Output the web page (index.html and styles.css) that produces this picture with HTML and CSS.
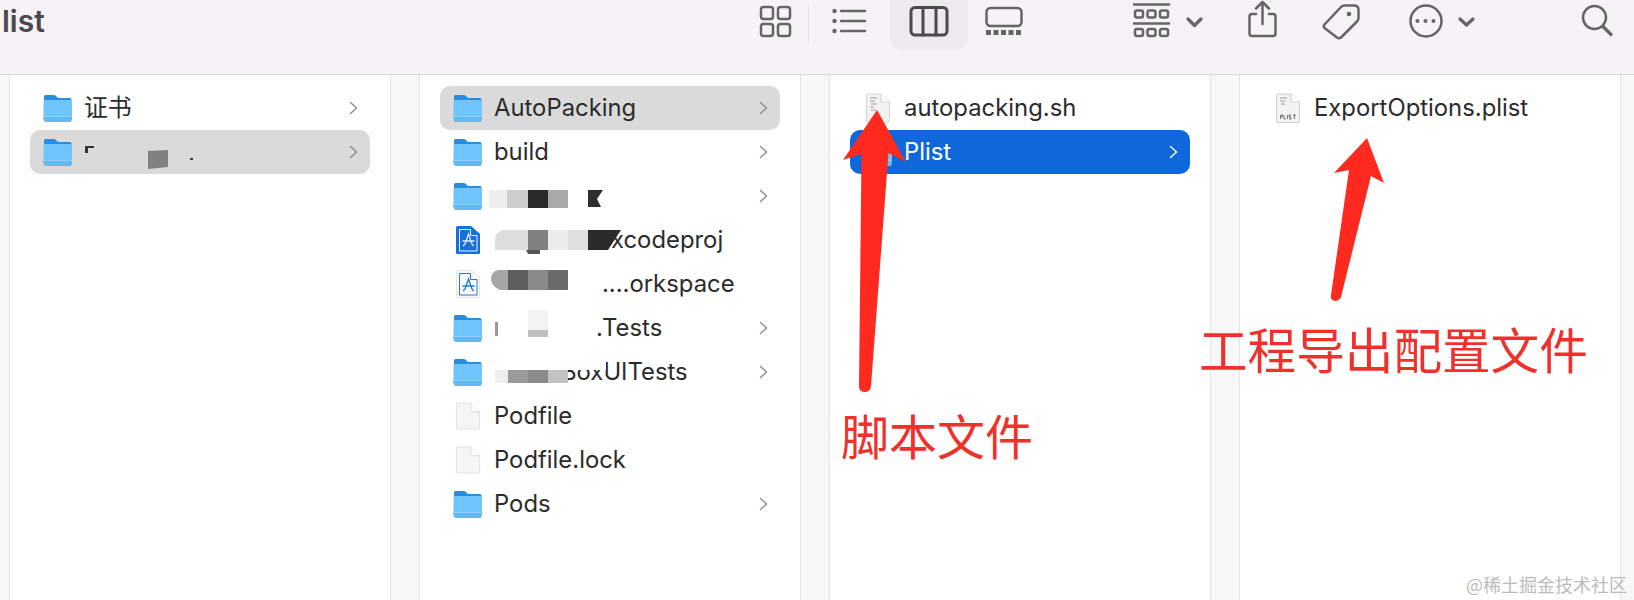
FILE: index.html
```html
<!DOCTYPE html>
<html lang="en">
<head>
    <meta charset="UTF-8">
    <meta name="viewport" content="width=device-width, initial-scale=1.0">
    <title>plist</title>
    <link rel="stylesheet" href="styles.css">
</head>
<body>
    <!-- shared file icons -->
    <svg class="defs" width="0" height="0">
        <symbol id="folder" viewBox="0 0 29 28">
            <path d="M1 12V2.5Q1 1 2.5 1H11Q12.5 1 13.5 2.5L15 4H27Q28.5 4 28.5 5.5V12Z" fill="#2a8ddb"/>
            <path d="M.5 8Q.5 6 2.5 6H27Q29 6 29 8V25Q29 27 27 27H2.5Q.5 27 .5 25Z" fill="#6fc6fc"/>
            <path d="M.5 22H29V25Q29 27 27 27H2.5Q.5 27 .5 25Z" fill="#60baf4"/>
            <path d="M.5 22.5H29" stroke="#8ad2fc"/>
            <path d="M1.5 27.5H28" stroke="#8fabbf" stroke-width="1"/>
        </symbol>
        <symbol id="doc" viewBox="0 0 26 29">
            <path d="M1.5 1H16L25 10V26.500Q25 28 23.5 28H2.5Q1 28 1 26.500V1.5Z" fill="#f5f5f5" stroke="#e0e0e0"/>
            <path d="M16 1V10H25" fill="#fff" stroke="#dedede"/>
        </symbol>
        <symbol id="project" viewBox="0 0 24 28">
            <path d="M1.5 0H15L24 8V26.500Q24 28 22.5 28H1.5Q0 28 0 26.500V1.5Q0 0 1.5 0Z" fill="#1670d8"/>
            <path d="M3.5 3.5H14.500V9.5H21V25H3.5Z" fill="none" stroke="#e8f2fd"/>
            <path d="M9 18L12.5 8L16 18M6.5 15H18.5M7 20L9 18M17.5 20L16 18" fill="none" stroke="#dcebfb" stroke-width="1.3"/>
        </symbol>
        <symbol id="workspace" viewBox="0 0 24 28">
            <path d="M1 .5H15L23.5 8V27.5H.5V1Z" fill="#fafafa" stroke="#e4e4e4"/>
            <path d="M3.5 3.5H14.500V9.5H21V25H3.5Z" fill="none" stroke="#1f78dc"/>
            <path d="M9 19L12.5 9L16 19M6.5 16H18.5M7 21L9 19M17.5 21L16 19" fill="none" stroke="#1f78dc" stroke-width="1.3"/>
        </symbol>
        <symbol id="script" viewBox="0 0 24 30">
            <path d="M1.5 1H15L23.5 9V28Q23.5 29.5 22 29.5H2Q.5 29.5 .5 28V2Q.5 1 1.5 1Z" fill="#f2f2f2" stroke="#d4d4d4"/>
            <path d="M15 1V9H23.5" fill="#fff" stroke="#d4d4d4"/>
            <path d="M4 5H11M4 8H9M5 11H11M4 14H8M5 17H10" stroke="#bdbdbd" stroke-width="1.3"/>
        </symbol>
        <symbol id="plist" viewBox="0 0 24 30">
            <path d="M1.5 1H15L23.5 9V28Q23.5 29.5 22 29.5H2Q.5 29.5 .5 28V2Q.5 1 1.5 1Z" fill="#f2f2f2" stroke="#cfcfcf"/>
            <path d="M15 1V9H23.5" fill="#fff" stroke="#cfcfcf"/>
            <path d="M4 5H11M4 8H9M5 11H9" stroke="#b8b8b8" stroke-width="1.3"/>
            <path d="M4.5 22V26M4.5 22H6.5V24H4.5M8 22V26H10M11.5 22V26M13 26H15V24H13V22H15M17 22H20M18.5 22V26" fill="none" stroke="#555" stroke-width=".8"/>
        </symbol>
        <symbol id="chevron" viewBox="0 0 9 14">
            <path d="M1.5 1.5L7.5 7L1.5 12.5" fill="none" stroke="currentColor" stroke-width="1.4" stroke-linecap="round"/>
        </symbol>
    </svg>

    <header class="toolbar">
        <div class="title">list</div>
        <svg class="tool tool-grid" width="34" height="50" viewBox="0 0 34 50">
            <rect x="3" y="7" width="12" height="12" rx="2.5"/><rect x="20" y="7" width="12" height="12" rx="2.5"/>
            <rect x="3" y="24" width="12" height="12" rx="2.5"/><rect x="20" y="24" width="12" height="12" rx="2.5"/>
        </svg>
        <div class="divider"></div>
        <svg class="tool tool-list" width="38" height="50" viewBox="0 0 38 50">
            <path d="M11 11H35M11 21H35M11 31H35"/>
            <circle class="dot" cx="4.5" cy="11" r="2.2"/><circle class="dot" cx="4.5" cy="21" r="2.2"/><circle class="dot" cx="4.5" cy="31" r="2.2"/>
        </svg>
        <div class="tool-active">
            <svg class="tool tool-dark" width="40" height="50" viewBox="0 0 40 50">
                <rect x="2" y="7.5" width="36" height="27.5" rx="4"/>
                <path d="M14 7.5V35M27 7.5V35"/>
            </svg>
        </div>
        <svg class="tool tool-gallery" width="42" height="50" viewBox="0 0 42 50">
            <rect x="3.5" y="8" width="35" height="18" rx="4"/>
            <path class="dot" d="M3 30h5v5h-5zM10.5 30h5v5h-5zM18 30h5v5h-5zM25.5 30h5v5h-5zM33 30h5v5h-5z"/>
        </svg>
        <svg class="tool tool-group" width="72" height="50" viewBox="0 0 72 50">
            <path d="M2 4.5H37M2 23.5H37"/>
            <rect x="3" y="10.5" width="8" height="7" rx="2"/><rect x="15.5" y="10.5" width="8" height="7" rx="2"/><rect x="28" y="10.5" width="8" height="7" rx="2"/>
            <rect x="3" y="29" width="8" height="7" rx="2"/><rect x="15.5" y="29" width="8" height="7" rx="2"/><rect x="28" y="29" width="8" height="7" rx="2"/>
            <path class="thick" d="M56 19L62.5 25.5L69 19"/>
        </svg>
        <svg class="tool tool-share" width="33" height="50" viewBox="0 0 33 50">
            <path d="M10 14H6Q3.5 14 3.5 16.500V33.5Q3.5 36 6 36H27Q29.5 36 29.5 33.5V16.500Q29.5 14 27 14H23"/>
            <path d="M16.5 24V2M10 8.5L16.5 2L23 8.5"/>
        </svg>
        <svg class="tool tool-tag" width="41" height="50" viewBox="0 0 41 50">
            <path d="M3.5 24.5L20 7Q21.5 5.5 23.5 5.5H33Q37.5 5.5 37.5 10V18Q37.5 20 36 21.500L20 37.5Q18 39 16 37.5L3.5 28Q2 26 3.5 24.5Z"/>
            <circle class="dot" cx="28" cy="14" r="2.3"/>
        </svg>
        <svg class="tool tool-more" width="69" height="50" viewBox="0 0 69 50">
            <circle cx="19" cy="21" r="15.5"/>
            <circle class="dot" cx="10.5" cy="21" r="2"/><circle class="dot" cx="18.5" cy="21" r="2"/><circle class="dot" cx="26.5" cy="21" r="2"/>
            <path class="thick" d="M53 19L59.5 25L66 19"/>
        </svg>
        <svg class="tool tool-search" width="34" height="50" viewBox="0 0 34 50">
            <circle cx="14.5" cy="17.5" r="11.5"/>
            <path class="thick" d="M23.5 27L31 34.5"/>
        </svg>
    </header>

    <main class="browser">
        <section class="col">
            <div class="row"><span class="slot"><svg class="icon-folder"><use href="#folder"/></svg></span><span class="name">证书</span><svg class="chev"><use href="#chevron"/></svg></div>
            <div class="row row-open"><span class="slot"><svg class="icon-folder"><use href="#folder"/></svg></span><span class="name"></span><svg class="chev"><use href="#chevron"/></svg></div>
        </section>
        <section class="col">
            <div class="row row-open"><span class="slot"><svg class="icon-folder"><use href="#folder"/></svg></span><span class="name">AutoPacking</span><svg class="chev"><use href="#chevron"/></svg></div>
            <div class="row"><span class="slot"><svg class="icon-folder"><use href="#folder"/></svg></span><span class="name">build</span><svg class="chev"><use href="#chevron"/></svg></div>
            <div class="row"><span class="slot"><svg class="icon-folder"><use href="#folder"/></svg></span><span class="name"></span><svg class="chev"><use href="#chevron"/></svg></div>
            <div class="row"><span class="slot"><svg class="icon-file"><use href="#project"/></svg></span><span class="name tail-xcode">xcodeproj</span></div>
            <div class="row"><span class="slot"><svg class="icon-file"><use href="#workspace"/></svg></span><span class="name tail-workspace">....orkspace</span></div>
            <div class="row"><span class="slot"><svg class="icon-folder"><use href="#folder"/></svg></span><span class="name tail-tests">.Tests</span><svg class="chev"><use href="#chevron"/></svg></div>
            <div class="row"><span class="slot"><svg class="icon-folder"><use href="#folder"/></svg></span><span class="name tail-ui">BoxUITests</span><svg class="chev"><use href="#chevron"/></svg></div>
            <div class="row"><span class="slot"><svg class="icon-file"><use href="#doc"/></svg></span><span class="name">Podfile</span></div>
            <div class="row"><span class="slot"><svg class="icon-file"><use href="#doc"/></svg></span><span class="name">Podfile.lock</span></div>
            <div class="row"><span class="slot"><svg class="icon-folder"><use href="#folder"/></svg></span><span class="name">Pods</span><svg class="chev"><use href="#chevron"/></svg></div>
        </section>
        <section class="col">
            <div class="row"><span class="slot"><svg class="icon-tall"><use href="#script"/></svg></span><span class="name">autopacking.sh</span></div>
            <div class="row row-active"><span class="slot"><svg class="icon-folder"><use href="#folder"/></svg></span><span class="name">Plist</span><svg class="chev"><use href="#chevron"/></svg></div>
        </section>
        <section class="col">
            <div class="row"><span class="slot"><svg class="icon-tall"><use href="#plist"/></svg></span><span class="name">ExportOptions.plist</span></div>
        </section>
    </main>

    <!-- mosaic over the hidden names, and the red arrows drawn on the screenshot -->
    <svg class="markup" width="1634" height="600" viewBox="0 0 1634 600">
        <path d="M85 146H94V148H88V153H85Z" fill="#333"/>
        <path d="M148 151L168 150V167L148 169Z" fill="#808080"/>
        <rect x="190" y="158" width="3" height="2" fill="#444"/>

        <rect x="489" y="190" width="18" height="18" fill="#eeeeee"/>
        <rect x="507" y="190" width="21" height="18" fill="#cccccc"/>
        <rect x="528" y="190" width="20" height="18" fill="#2a2a2a"/>
        <rect x="548" y="190" width="20" height="18" fill="#a9a9a9"/>
        <path d="M588 190H603L597 199L601 207H588Z" fill="#2e2e2e"/>

        <path d="M503 230H528V250H495V240Q495 232 503 230Z" fill="#dddddd"/>
        <rect x="528" y="230" width="20" height="20" fill="#808080"/>
        <rect x="548" y="230" width="20" height="20" fill="#ececec"/>
        <rect x="568" y="230" width="20" height="20" fill="#dedede"/>
        <path d="M588 230H621L608 250H588Z" fill="#2b2b2b"/>
        <path d="M495 250H540V254H528L526 250H495Z" fill="#555"/>

        <path d="M498 270H508V290H500Q491 286 491 279Q491 272 498 270Z" fill="#a6a6a6"/>
        <rect x="508" y="270" width="20" height="20" fill="#5e5e5e"/>
        <rect x="528" y="270" width="20" height="20" fill="#8a8a8a"/>
        <rect x="548" y="270" width="20" height="20" fill="#6a6a6a"/>

        <rect x="528" y="310" width="20" height="20" fill="#f4f4f4"/>
        <rect x="528" y="330" width="20" height="7" fill="#c0c0c0"/>
        <rect x="495" y="322" width="3" height="14" fill="#999"/>

        <rect x="540" y="352" width="66" height="18" fill="#fff"/>
        <rect x="495" y="370" width="13" height="13" fill="#eeeeee"/>
        <rect x="508" y="370" width="20" height="13" fill="#9a9a9a"/>
        <rect x="528" y="370" width="20" height="13" fill="#8a8a8a"/>
        <rect x="548" y="370" width="20" height="13" fill="#c2c2c2"/>

        <path d="M877 110L906 162L888.5 153L871 386Q870 392 865 392Q859 392 859 386L861.5 154L843 160Z" class="arrow"/>
        <path d="M1367 138L1384 183L1371 176L1341 297Q1339 301 1335 301Q1330 300 1331 295L1349 170L1334 173Z" class="arrow"/>
    </svg>

    <div class="note note-script">脚本文件</div>
    <div class="note note-export">工程导出配置文件</div>
    <div class="watermark">@稀土掘金技术社区</div>
</body>
</html>
```
FILE: styles.css
```css
* {
    box-sizing: border-box;
}
html, body {
    margin: 0;
    height: 600px;
    overflow: hidden;
}
body {
    position: relative;
    width: 1634px;
    background: #f7f6f8;
    font-family: Inter, "Noto Sans CJK SC", sans-serif;
    font-size: 23.85px;
    color: #2b2b2b;
}
.defs {
    position: absolute;
}

/* toolbar */
.toolbar {
    display: flex;
    align-items: flex-start;
    height: 75px;
    background: #f6f2f8;
    border-bottom: 1px solid #d9d7db;
}
.title {
    flex: 0 0 758px;
    padding: 2px 0 0 2px;
    font-size: 30px;
    line-height: 38px;
    font-weight: 600;
    color: #4b494c;
}
.tool {
    flex: none;
    fill: none;
    stroke: #676467;
    stroke-width: 2.5;
    stroke-linecap: round;
    stroke-linejoin: round;
}
.tool .dot {
    fill: #676467;
    stroke: none;
}
.tool .thick {
    stroke-width: 3.2;
}
.divider {
    width: 1px;
    height: 38px;
    margin: 5px 0 0 16px;
    background: #e6e2e8;
}
.tool-list {
    margin-left: 21px;
}
.tool-active {
    display: flex;
    justify-content: center;
    width: 78px;
    height: 50px;
    margin-left: 22px;
    background: #ede9ee;
    border-radius: 0 0 12px 12px;
}
.tool-dark {
    stroke: #4c494c;
    stroke-width: 3;
}
.tool-gallery {
    margin-left: 15px;
}
.tool-group {
    margin-left: 107px;
}
.tool-share {
    margin-left: 42px;
}
.tool-tag {
    margin-left: 42px;
}
.tool-more {
    margin-left: 45px;
}
.tool-search {
    margin-left: 104px;
}

/* column view */
.browser {
    display: flex;
    gap: 28px;
    height: 525px;
    padding-left: 9px;
}
.col {
    flex: 0 0 382px;
    padding: 11px 20px 0;
    background: #fff;
    border-left: 1px solid #e4e4e4;
    border-right: 1px solid #e4e4e4;
}
.row {
    display: flex;
    align-items: center;
    height: 44px;
    padding: 0 12px 0 13px;
    border-radius: 10px;
    color: #8c8c8c;
}
.row-open {
    background: #dadada;
}
.row-active {
    background: #0f67dc;
    color: #fff;
}
.slot {
    flex: none;
    display: flex;
    align-items: center;
    justify-content: center;
    width: 29px;
    height: 44px;
}
.icon-folder {
    width: 29px;
    height: 28px;
}
.icon-file {
    width: 26px;
    height: 28px;
}
.icon-tall {
    width: 24px;
    height: 30px;
}
.name {
    flex: 1;
    margin-left: 12px;
    color: #2b2b2b;
    line-height: 44px;
    white-space: nowrap;
}
.row-active .name {
    color: #fff;
}
.chev {
    flex: none;
    width: 9px;
    height: 14px;
}

/* names that are partly covered by the mosaic */
.tail-xcode {
    margin-left: 129px;
}
.tail-workspace {
    margin-left: 120px;
}
.tail-tests {
    margin-left: 114px;
}
.tail-ui {
    margin-left: 79px;
}

/* annotations */
.markup {
    position: absolute;
    top: 0;
    left: 0;
}
.arrow {
    fill: #ff2a1f;
}
.note {
    position: absolute;
    font-family: "Noto Sans CJK SC", sans-serif;
    font-size: 48px;
    line-height: 60px;
    color: #f0302a;
    white-space: nowrap;
}
.note-script {
    left: 841px;
    top: 404px;
}
.note-export {
    left: 1199px;
    top: 318px;
    font-size: 48.6px;
}
.watermark {
    position: absolute;
    right: 7px;
    top: 572px;
    font-family: "Noto Sans CJK SC", sans-serif;
    font-size: 18px;
    line-height: 24px;
    color: #bbbbbb;
}
```
